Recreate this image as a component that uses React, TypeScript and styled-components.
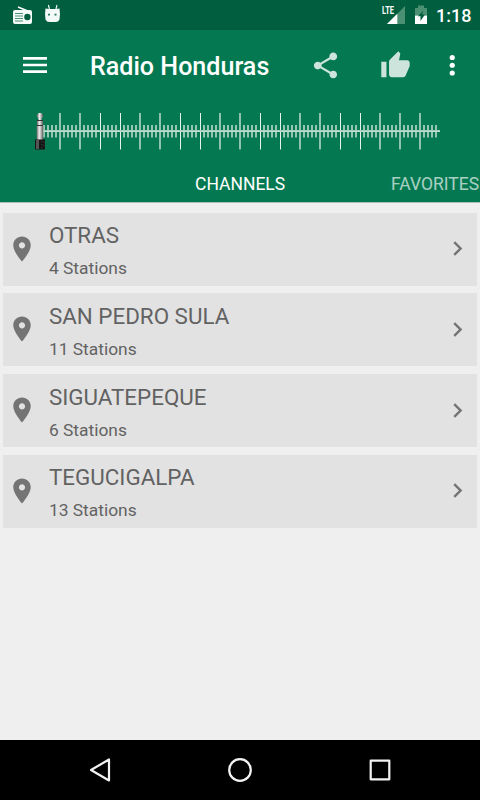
import React from "react";
import styled, { createGlobalStyle } from "styled-components";

const GlobalStyle = createGlobalStyle`
  * { box-sizing: border-box; }
  body { margin: 0; background: #efefef; font-family: Roboto, sans-serif; }
`;

const Screen = styled.div`
  width: 480px;
  height: 800px;
  display: flex;
  flex-direction: column;
  overflow: hidden;
  background: #efefef;
`;

const StatusBar = styled.div`
  height: 30px;
  flex: none;
  display: flex;
  align-items: flex-start;
  justify-content: space-between;
  background: #015f3f;
  color: #fff;
`;

const StatusGroup = styled.div`
  display: flex;
`;

const StatusIcons = styled.svg<{ $width: number }>`
  display: block;
  width: ${(p) => p.$width}px;
  height: 30px;
`;

const Clock = styled.span`
  width: 44px;
  font-size: 18px;
  font-weight: 500;
  line-height: 32px;
`;

const Header = styled.header`
  height: 173px;
  flex: none;
  display: flex;
  flex-direction: column;
  background: #047951;
  border-bottom: 1px solid #a9c0b3;
  color: #fff;
`;

const Toolbar = styled.div`
  height: 70px;
  flex: none;
  display: flex;
  align-items: center;
  padding-left: 19px;
`;

const Title = styled.h1`
  flex: none;
  width: 219.6px;
  margin: 0 0 0 39px;
  padding-top: 3px;
  font-size: 25.1px;
  line-height: 30px;
  font-weight: 500;
  white-space: nowrap;
`;

const Icon = styled.svg<{ $size: number; $gap?: number; $alpha?: number }>`
  display: block;
  flex: none;
  width: ${(p) => p.$size}px;
  height: ${(p) => p.$size}px;
  margin-left: ${(p) => p.$gap ?? 0}px;
  opacity: ${(p) => p.$alpha ?? 1};
  fill: currentColor;
`;

const RowIcon = styled(Icon)`
  margin-bottom: 1px;
`;

const Dial = styled.svg`
  display: block;
  width: 480px;
  height: 60px;
  flex: none;
`;

const Tabs = styled.nav`
  display: flex;
  padding: 13px 0 0 195px;
  font-size: 17.5px;
  line-height: 22px;
  white-space: nowrap;
`;

const Tab = styled.span<{ $active?: boolean }>`
  flex: none;
  width: 196px;
  opacity: ${(p) => (p.$active ? 1 : 0.65)};
`;

const List = styled.main`
  flex: 1;
  display: flex;
  flex-direction: column;
  gap: 7.4px;
  padding: 9.5px 2.6px 0 2.6px;
`;

const Row = styled.section`
  height: 73.3px;
  flex: none;
  display: flex;
  align-items: center;
  padding: 0 5.4px 0 4.8px;
  background: #e2e2e2;
  color: #747474;
`;

const RowText = styled.div`
  flex: 1;
  padding: 1px 0 0 11.5px;
`;

const City = styled.div`
  font-size: 22.4px;
  line-height: 30px;
  color: #626262;
`;

const Stations = styled.div`
  padding-top: 7px;
  font-size: 17.4px;
  line-height: 22px;
  color: #626262;
`;

const NavBar = styled.footer`
  height: 60px;
  flex: none;
  display: flex;
  align-items: center;
  justify-content: center;
  gap: 110px;
  background: #000;
`;

const NavIcon = styled.svg`
  width: 30px;
  height: 30px;
  fill: none;
  stroke: #f2f2f2;
  stroke-width: 2.2;
  stroke-linejoin: round;
`;

const cities = [
  { name: "OTRAS", count: 4 },
  { name: "SAN PEDRO SULA", count: 11 },
  { name: "SIGUATEPEQUE", count: 6 },
  { name: "TEGUCIGALPA", count: 13 },
];

const ticks = Array.from({ length: 99 }, (_, i) => 44 + i * 4);

function TuningDial() {
  return (
    <Dial viewBox="0 100 480 60">
      <defs>
        <linearGradient id="metal">
          <stop offset="0" stopColor="#666" />
          <stop offset="0.4" stopColor="#eee" />
          <stop offset="0.65" stopColor="#bbb" />
          <stop offset="1" stopColor="#555" />
        </linearGradient>
      </defs>
      {ticks.map((x) => {
        const major = x % 20 === 0;
        const crisp = x < 420 && (x % 80 === 20 || x % 80 === 40);
        return major ? (
          <rect key={x} x={crisp ? x : x - 1} y="113" width={crisp ? 1 : 2} height="36.5" fill={crisp ? "#e6f2ed" : "#8fc2af"} />
        ) : (
          <rect key={x} x={x - 1} y="125" width="2" height="12.5" fill="#93c5b2" />
        );
      })}
      <rect x="42" y="130" width="398" height="2" fill="#a3cebe" />
      <rect x="42" y="131" width="398" height="1" fill="#bfdfd2" />
      <path d="M38.5 113h3l1.5 2v2l-1.3 1.5v1.5h-3.4v-1.5L37 117v-2z" fill="url(#metal)" />
      <rect x="37" y="120" width="6" height="6" fill="url(#metal)" />
      <rect x="36.6" y="126" width="6.6" height="14" fill="url(#metal)" />
      <path d="M37 120.5h6M37 125.5h6" stroke="#333" />
      <rect x="35" y="139.5" width="10" height="10" fill="#161616" />
      <path d="M37.5 140v9" stroke="#555" strokeWidth="3" />
      <path d="M42 141v8M44 142v6" stroke="#444" strokeDasharray="1 2" />
    </Dial>
  );
}

export default function App() {
  return (
    <>
      <GlobalStyle />
      <Screen>
        <StatusBar>
          <StatusIcons $width={80} viewBox="0 0 80 30">
            <path d="M18 7l11 4.5" stroke="#fff" strokeWidth="1.4" />
            <path fill="#f4faf7" fillRule="evenodd" d="M15 10h15a2 2 0 0 1 2 2v10a2 2 0 0 1-2 2H15a2 2 0 0 1-2-2V12a2 2 0 0 1 2-2zM30.6 17a3.2 3.2 0 1 0-6.4 0a3.2 3.2 0 1 0 6.4 0z" />
            <path d="M15 13.5h8M15 16h8M15 18.5h8M15 21h8" stroke="#4b9175" />
            <path d="M48.4 5l1 4M57 5l-1 4" stroke="#eaf5f0" strokeWidth="1.2" />
            <path d="M45.5 8.5q7 1 14 0q1 6 0 11q-1 2.5-4 2.5h-6q-3 0-4-2.5q-1-5 0-11z" fill="#f4faf7" />
            <path d="M48 14.7h2M54.5 14.7h2" stroke="#287d5b" strokeWidth="1.8" />
          </StatusIcons>
          <StatusGroup>
            <StatusIcons $width={66} viewBox="370 0 66 30">
              <text x="382" y="14" fontSize="10" fontWeight="700" textLength="12" lengthAdjust="spacingAndGlyphs" fill="#fff">LTE</text>
              <path d="M405 6v18h-18l8-8v-1h1z" fill="#4c9073" />
              <path d="M397.3 13.7V24H387z" fill="#fff" />
              <path d="M415 8h3V5.5h6V8h3v7.5h-12z" fill="#4c9073" />
              <path d="M415 15.5h12V24h-12z" fill="#fff" />
              <path d="M423.5 10.5l-1.5 4h3l-4.5 6.5v-4.7h-2.6z" fill="#015f3f" />
            </StatusIcons>
            <Clock>1:18</Clock>
          </StatusGroup>
        </StatusBar>
        <Header>
          <Toolbar>
            <Icon $size={32} viewBox="0 0 24 24"><path d="M3 18h18v-2H3v2zm0-5h18v-2H3v2zm0-7v2h18V6H3z" /></Icon>
            <Title>Radio Honduras</Title>
            <Icon $size={31} $alpha={0.8} viewBox="0 0 24 24">
              <path d="M18 16.08c-.76 0-1.44.3-1.96.77L8.91 12.7c.05-.23.09-.46.09-.7s-.04-.47-.09-.7l7.05-4.11c.54.5 1.25.81 2.04.81 1.66 0 3-1.34 3-3s-1.34-3-3-3-3 1.34-3 3c0 .24.04.47.09.7L8.04 9.81C7.5 9.31 6.79 9 6 9c-1.66 0-3 1.34-3 3s1.34 3 3 3c.79 0 1.5-.31 2.04-.81l7.12 4.16c-.05.21-.08.43-.08.65 0 1.61 1.31 2.92 2.92 2.92s2.92-1.31 2.92-2.92-1.31-2.92-2.92-2.92z" />
            </Icon>
            <Icon $size={31} $gap={39} $alpha={0.8} viewBox="0 0 24 24">
              <path d="M1 21h4V9H1v12zm22-11c0-1.1-.9-2-2-2h-6.31l.95-4.57.03-.32c0-.41-.17-.79-.44-1.06L14.17 1 7.59 7.59C7.22 7.95 7 8.45 7 9v10c0 1.1.9 2 2 2h9c.83 0 1.54-.5 1.84-1.22l3.02-7.05c.09-.23.14-.47.14-.73v-2z" />
            </Icon>
            <Icon $size={31} $gap={26.6} viewBox="0 0 24 24">
              <circle cx="11.8" cy="5.8" r="2" /><circle cx="11.8" cy="11.8" r="2" /><circle cx="11.8" cy="17.8" r="2" />
            </Icon>
          </Toolbar>
          <TuningDial />
          <Tabs>
            <Tab $active>CHANNELS</Tab>
            <Tab>FAVORITES</Tab>
          </Tabs>
        </Header>
        <List>
          {cities.map((city) => (
            <Row key={city.name}>
              <RowIcon $size={30} viewBox="0 0 24 24">
                <path d="M12 2C8.13 2 5 5.13 5 9c0 5.25 7 13 7 13s7-7.75 7-13c0-3.87-3.13-7-7-7zm0 9.5c-1.38 0-2.5-1.12-2.5-2.5s1.12-2.5 2.5-2.5 2.5 1.12 2.5 2.5-1.12 2.5-2.5 2.5z" />
              </RowIcon>
              <RowText>
                <City>{city.name}</City>
                <Stations>{city.count} Stations</Stations>
              </RowText>
              <RowIcon $size={29} viewBox="0 0 24 24"><path d="M10 6L8.59 7.41 13.17 12l-4.58 4.59L10 18l6-6z" /></RowIcon>
            </Row>
          ))}
        </List>
        <NavBar>
          <NavIcon viewBox="0 0 30 30"><path d="M24 4.5v21L6 15z" /></NavIcon>
          <NavIcon viewBox="0 0 30 30"><circle cx="15" cy="15" r="10.8" /></NavIcon>
          <NavIcon viewBox="0 0 30 30"><rect x="5.7" y="5.7" width="18.6" height="18.6" /></NavIcon>
        </NavBar>
      </Screen>
    </>
  );
}
